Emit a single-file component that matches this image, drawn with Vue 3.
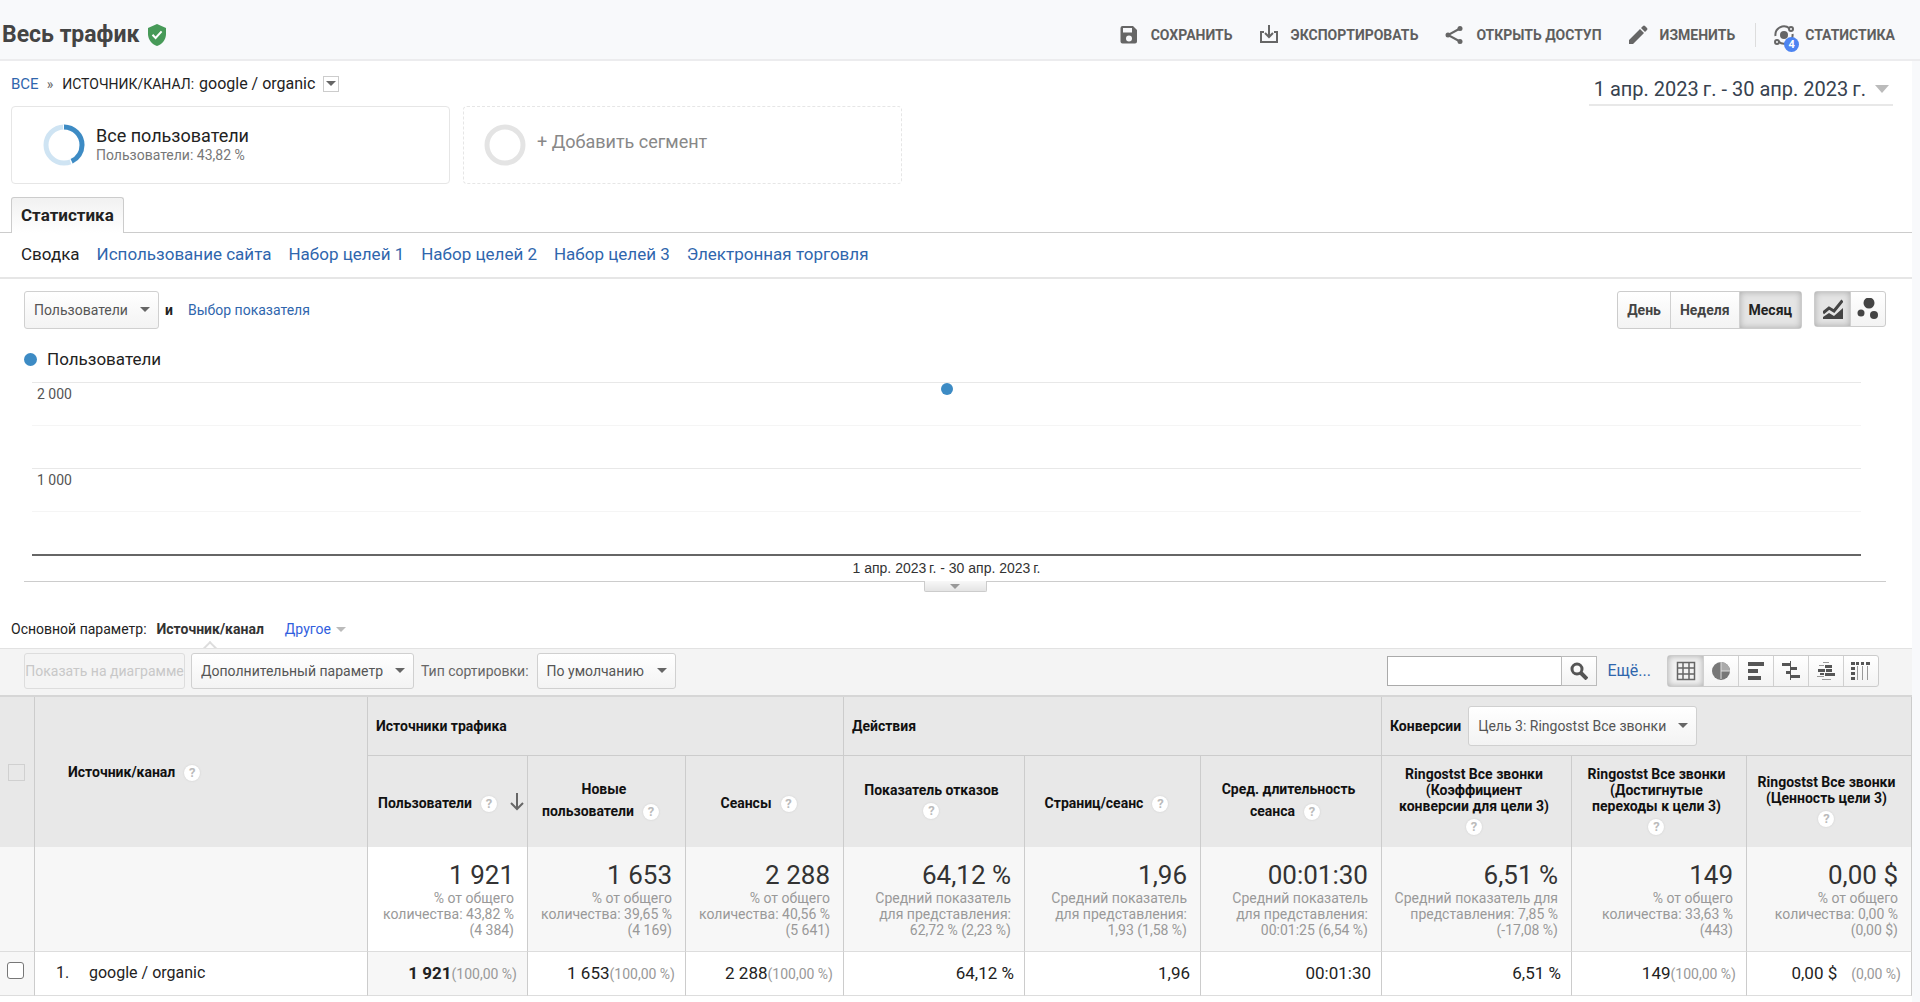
<script setup>
import { ref } from 'vue'

const actions = [
  { id: 'save', label: 'СОХРАНИТЬ' },
  { id: 'export', label: 'ЭКСПОРТИРОВАТЬ' },
  { id: 'share', label: 'ОТКРЫТЬ ДОСТУП' },
  { id: 'edit', label: 'ИЗМЕНИТЬ' },
]
const sections = ['Использование сайта', 'Набор целей 1', 'Набор целей 2', 'Набор целей 3', 'Электронная торговля']
const periods = ['День', 'Неделя', 'Месяц']
const period = ref('Месяц')
const range = '1 апр. 2023\u2009г. - 30 апр. 2023\u2009г.'
const views = ['table', 'pie', 'bars', 'compare', 'cloud', 'pivot']
const viewNames = {
  table: 'Таблица',
  pie: 'Доля',
  bars: 'Эффективность',
  compare: 'Сравнение',
  cloud: 'Облако терминов',
  pivot: 'Сводная таблица',
}
const view = ref('table')
const search = ref('')
const picked = ref(false)

const ticks = [
  { y: 0, label: '2 000' },
  { y: 25 },
  { y: 50, label: '1 000' },
  { y: 75 },
]
const peak = { x: 50, y: 4 }

const columns = [
  { head: ['Пользователи'], total: '1 921', note: ['% от общего', 'количества: 43,82 %', '(4 384)'], value: '1 921', share: '(100,00 %)', sorted: true },
  { head: ['Новые', 'пользователи'], total: '1 653', note: ['% от общего', 'количества: 39,65 %', '(4 169)'], value: '1 653', share: '(100,00 %)' },
  { head: ['Сеансы'], total: '2 288', note: ['% от общего', 'количества: 40,56 %', '(5 641)'], value: '2 288', share: '(100,00 %)' },
  { head: ['Показатель отказов', ''], total: '64,12 %', note: ['Средний показатель', 'для представления:', '62,72 % (2,23 %)'], value: '64,12 %' },
  { head: ['Страниц/сеанс'], total: '1,96', note: ['Средний показатель', 'для представления:', '1,93 (1,58 %)'], value: '1,96' },
  { head: ['Сред. длительность', 'сеанса'], total: '00:01:30', note: ['Средний показатель', 'для представления:', '00:01:25 (6,54 %)'], value: '00:01:30' },
  { head: ['Ringostst Все звонки', '(Коэффициент', 'конверсии для цели 3)', ''], total: '6,51 %', note: ['Средний показатель для', 'представления: 7,85 %', '(-17,08 %)'], value: '6,51 %' },
  { head: ['Ringostst Все звонки', '(Достигнутые', 'переходы к цели 3)', ''], total: '149', note: ['% от общего', 'количества: 33,63 %', '(443)'], value: '149', share: '(100,00 %)' },
  { head: ['Ringostst Все звонки', '(Ценность цели 3)', ''], total: '0,00 $', note: ['% от общего', 'количества: 0,00 %', '(0,00 $)'], value: '0,00 $', share: '(0,00 %)', spaced: true },
]
</script>

<template>
  <div class="page">
    <header class="topbar">
      <h1>Весь трафик</h1>
      <svg class="shield" viewBox="0 0 18 22" width="18" height="22">
        <path d="M9 0 18 4v6c0 5.500-3.800 10.300-9 12-5.200-1.700-9-6.500-9-12V4z" fill="#479a58" />
        <path d="M4.500 10.800 7.600 14l6-6.600" fill="none" stroke="#fff" stroke-width="2" />
      </svg>
      <div class="actions">
        <button v-for="a in actions" :key="a.id" type="button" class="action">
          <svg viewBox="0 0 20 20" width="20" height="20">
            <path v-if="a.id === 'save'" fill-rule="evenodd" fill="#666" d="M3.500 1H14l4 4v11.500a2 2 0 0 1-2 2H3.500a2 2 0 0 1-2-2V3a2 2 0 0 1 2-2zM4 3v4.500h9V3zM10 10.500a3 3 0 1 0 0 6 3 3 0 0 0 0-6z" />
            <path v-else-if="a.id === 'export'" fill="none" stroke="#666" stroke-width="2" d="M10 0v12M6 8l4 4 4-4M5 7H2v10h16V7h-3" />
            <g v-else-if="a.id === 'share'" fill="#666">
              <path d="M16 3.500 4 10l12 6.500" fill="none" stroke="#666" stroke-width="2" />
              <circle cx="16" cy="3.500" r="2.500" /><circle cx="4" cy="10" r="2.500" /><circle cx="16" cy="16.500" r="2.500" />
            </g>
            <path v-else fill="#666" d="M1 19v-4L12 4l4 4L5 19zM13 3l2-2q1-1 2 0l2 2q1 1 0 2l-2 2z" />
          </svg>
          {{ a.label }}
        </button>
        <button type="button" class="action insight">
          <span class="insight-icon">
            <svg viewBox="0 0 22 22" width="22" height="22">
              <circle cx="11" cy="11" r="4" fill="#666" />
              <path d="M2.500 12a8.500 8.500 0 0 1 14-7.500M19.500 10a8.500 8.500 0 0 1-14 7.500" fill="none" stroke="#666" stroke-width="2" />
              <circle cx="18" cy="5" r="2" fill="#f8f9fb" stroke="#666" stroke-width="2" />
              <circle cx="4" cy="18" r="2" fill="#f8f9fb" stroke="#666" stroke-width="2" />
            </svg>
            <span class="badge">4</span>
          </span>
          СТАТИСТИКА
        </button>
      </div>
    </header>

    <main class="report">
      <div class="intro">
        <div class="crumbs">
          <a href="#">ВСЕ</a><span class="sep">»</span><span>ИСТОЧНИК/КАНАЛ:</span>
          <span class="crumb-value">google / organic</span>
          <button type="button" class="crumb-menu" aria-label="Выбрать значение"><i class="tri"></i></button>
        </div>
        <button type="button" class="range">{{ range }}<i class="tri big"></i></button>
      </div>

      <div class="segments">
        <div class="segment">
          <svg viewBox="0 0 42 42" width="42" height="42">
            <circle cx="21" cy="21" r="18" fill="none" stroke="#cfe4f3" stroke-width="5" />
            <circle cx="21" cy="21" r="18" fill="none" stroke="#fff" stroke-width="5" pathLength="100" stroke-dasharray="45 55" transform="rotate(-93 21 21)" />
            <circle cx="21" cy="21" r="18" fill="none" stroke="#3d8bc4" stroke-width="5" pathLength="100" stroke-dasharray="43 57" transform="rotate(-90 21 21)" />
          </svg>
          <div class="segment-text">
            <div class="segment-name">Все пользователи</div>
            <div class="segment-note">Пользователи: 43,82 %</div>
          </div>
        </div>
        <button type="button" class="segment empty">
          <svg viewBox="0 0 42 42" width="42" height="42">
            <circle cx="21" cy="21" r="18" fill="none" stroke="#e4e4e4" stroke-width="5" />
          </svg>
          <span class="segment-name">+ Добавить сегмент</span>
        </button>
      </div>

      <div class="tabs"><button type="button" class="tab">Статистика</button></div>
      <nav class="sections">
        <span>Сводка</span>
        <a v-for="s in sections" :key="s" href="#">{{ s }}</a>
      </nav>

      <div class="chart-tools">
        <label class="drop metric"><select aria-label="Показатель"><option>Пользователи</option></select></label>
        <b class="and">и</b>
        <a href="#">Выбор показателя</a>
        <div class="group periods">
          <button v-for="p in periods" :key="p" type="button" :class="{ on: p === period }" @click="period = p">{{ p }}</button>
        </div>
        <div class="group kinds">
          <button type="button" class="on" aria-label="Линейная диаграмма">
            <svg viewBox="0 0 20 20" width="20" height="20">
              <path d="M0 20v-2l6-4 5 3 9-8v11z" fill="#444" />
              <path d="M0 14l6-5 5 3 8.500-10.500" fill="none" stroke="#444" stroke-width="3" />
            </svg>
          </button>
          <button type="button" aria-label="Диаграмма движения">
            <svg viewBox="0 0 22 22" width="22" height="22" fill="#444">
              <circle cx="12" cy="5" r="5.500" /><circle cx="4" cy="15" r="3.500" /><circle cx="17" cy="17" r="4" />
            </svg>
          </button>
        </div>
      </div>

      <div class="legend"><i></i>Пользователи</div>
      <div class="plot">
        <div v-for="t in ticks" :key="t.y" class="tick" :class="{ minor: !t.label }">{{ t.label }}</div>
        <i class="point" :style="{ left: peak.x + '%', top: peak.y + '%' }"></i>
      </div>
      <div class="axis-label">{{ range }}</div>
      <div class="divider"><button type="button" class="handle" aria-label="Свернуть график"><i class="tri"></i></button></div>

      <div class="dimension">
        <span>Основной параметр:</span>
        <b>Источник/канал</b>
        <a href="#">Другое<i class="tri"></i></a>
      </div>

      <div class="table-tools">
        <button type="button" class="plot-rows" disabled>Показать на диаграмме</button>
        <label class="drop second"><select aria-label="Дополнительный параметр"><option>Дополнительный параметр</option></select></label>
        <label class="sort-label" for="sort">Тип сортировки:</label>
        <span class="drop sort"><select id="sort"><option>По умолчанию</option></select></span>
        <form class="search" @submit.prevent>
          <input v-model="search" type="text" aria-label="Поиск">
          <button type="submit" aria-label="Найти">
            <svg viewBox="0 0 18 18" width="18" height="18" fill="none" stroke="#555">
              <circle cx="7" cy="7" r="5" stroke-width="3" /><path d="m11 11 6 6" stroke-width="4" />
            </svg>
          </button>
        </form>
        <a href="#" class="more">Ещё...</a>
        <div class="group views">
          <button v-for="v in views" :key="v" type="button" :class="{ on: v === view }" :aria-label="viewNames[v]" @click="view = v">
            <svg viewBox="0 0 20 20" width="20" height="20" fill="#555">
              <path v-if="v === 'table'" d="M1.500 1.500h17v17h-17zM1.500 7h17M1.500 13h17M7 1.500v17M13 1.500v17" fill="none" stroke="#666" stroke-width="1.500" />
              <template v-else-if="v === 'pie'">
                <circle cx="10" cy="10" r="9" fill="#777" /><path d="M10 1a9 9 0 0 1 9 9h-9z" fill="#aaa" /><path d="M10 1v17M10 10h9" stroke="#ddd" />
              </template>
              <path v-else-if="v === 'bars'" d="M2 1h16v4H2zM2 8h10v4H2zM2 15h13v4H2z" />
              <path v-else-if="v === 'compare'" d="M1 2h9v3H1zM10 6h6v3h-6zM5 10h5v3H5zM10 14h9v3h-9zM9 0h1v19H9z" />
              <template v-else-if="v === 'cloud'">
                <path d="M9 4h7v3H9zM2 8h7v3H2zM10 8h6v3h-6zM4 12h4v2H4zM9 12h10v3H9z" />
                <path d="M7 1h6v1H7zM3 4h5v1H3zM1 15h7v1H1zM6 18h9v1H6z" fill="#999" />
              </template>
              <template v-else>
                <path d="M0 1h4v3H0zM5 1h3v3H5zM10 1h3v3h-3zM15 1h4v3h-4zM0 6h4v3H0zM0 11h4v3H0zM0 16h4v3H0z" />
                <path d="M6 5h1v14H6zM11 5h1v14h-1zM16 5h1v14h-1z" fill="#999" />
              </template>
            </svg>
          </button>
        </div>
      </div>

      <table class="data">
        <colgroup>
          <col class="c-check"><col class="c-name"><col class="c-160"><col class="c-158"><col class="c-158">
          <col class="c-181"><col class="c-176"><col class="c-181"><col class="c-190"><col class="c-175"><col class="c-165">
        </colgroup>
        <thead>
          <tr class="groups">
            <th rowspan="2" class="check"><input type="checkbox" disabled aria-label="Выбрать все"></th>
            <th rowspan="2" class="name">Источник/канал<i class="help">?</i></th>
            <th colspan="3">Источники трафика</th>
            <th colspan="3">Действия</th>
            <th colspan="3">
              <div class="goal">
                <label for="goal">Конверсии</label>
                <span class="drop"><select id="goal"><option>Цель 3: Ringostst Все звонки</option></select></span>
              </div>
            </th>
          </tr>
          <tr class="heads">
            <th v-for="(c, i) in columns" :key="i">
              <div class="head" :class="{ ordered: c.sorted }">
                <div>
                  <div v-for="(line, n) in c.head" :key="n" class="line" :class="{ last: n === c.head.length - 1, bare: !line }">
                    {{ line }}<i v-if="n === c.head.length - 1" class="help">?</i>
                  </div>
                </div>
                <svg v-if="c.sorted" viewBox="0 0 14 18" width="14" height="18" fill="none" stroke="#666" stroke-width="2">
                  <path d="M7 0v16M1 10l6 6 6-6" />
                </svg>
              </div>
            </th>
          </tr>
        </thead>
        <tbody>
          <tr class="totals">
            <td></td>
            <td></td>
            <td v-for="(c, i) in columns" :key="i" :class="{ sorted: c.sorted }">
              <div class="total">{{ c.total }}</div>
              <div v-for="n in c.note" :key="n" class="note">{{ n }}</div>
            </td>
          </tr>
          <tr class="row">
            <td class="check"><input v-model="picked" type="checkbox" aria-label="google / organic"></td>
            <td class="source"><span>1.</span>google / organic</td>
            <td v-for="(c, i) in columns" :key="i" :class="{ sorted: c.sorted }">
              <span class="value">{{ c.value }}</span><span v-if="c.share" class="share" :class="{ spaced: c.spaced }">{{ c.share }}</span>
            </td>
          </tr>
        </tbody>
      </table>
    </main>
  </div>
</template>

<style>
body {
  margin: 0;
  background: #f8f9fb;
}
</style>

<style scoped>
.page {
  display: flex;
  flex-direction: column;
  min-height: 100vh;
  font: 14px/16px Roboto, "Noto Sans", sans-serif;
  color: #222;
}
.page *, .page *::after { box-sizing: border-box; }
button, select, input { font: inherit; color: inherit; margin: 0; }
button { padding: 0; border: 0; background: none; }
a { color: #2f66ad; text-decoration: none; }
.tri {
  display: inline-block;
  border: 5px solid transparent;
  border-top-color: #666;
  border-bottom: 0;
}
.topbar {
  display: flex;
  align-items: center;
  height: 61px;
  padding: 10px 25px 0 2px;
  border-bottom: 2px solid #ececee;
}
h1 { margin: 0 9px 0 0; font-size: 23px; line-height: 28px; color: #444; }
.actions { display: flex; align-items: center; gap: 26px; margin-left: auto; }
.action {
  display: flex;
  align-items: center;
  gap: 12px;
  font-weight: bold;
  color: #5f5f5f;
}
.insight { gap: 10px; height: 24px; padding-left: 17px; border-left: 1px solid #ddd; margin-left: -6px; }
.insight-icon { position: relative; display: flex; }
.badge {
  position: absolute;
  right: -4px;
  bottom: -6px;
  width: 15px;
  border-radius: 8px;
  background: #4d84f1;
  color: #fff;
  font-size: 11px;
  line-height: 15px;
  text-align: center;
}
.report { flex: 1; margin-right: 8px; background: #fff; }
.intro { display: flex; justify-content: space-between; padding: 0 19px 0 11px; height: 45px; }
.crumbs { display: flex; align-items: center; height: 45px; color: #222; }
.crumbs a { font-size: 15px; }
.sep { margin: 0 9px 0 8px; color: #666; }
.crumb-value { margin: 0 8px 0 5px; font-size: 16px; }
.crumb-menu {
  display: flex;
  align-items: center;
  justify-content: center;
  width: 16px;
  height: 16px;
  border: 1px solid #ccc;
}
.range {
  display: flex;
  align-items: center;
  gap: 9px;
  align-self: flex-end;
  height: 32px;
  padding: 0 4px 1px 5px;
  border-bottom: 2px solid #e8e8e8;
  font-size: 20px;
  color: #37424f;
}
.tri.big { border-width: 8px 7px 0; border-top-color: #bbb; }
.segments { display: flex; gap: 13px; padding: 0 11px; }
.segment {
  display: flex;
  align-items: center;
  gap: 11px;
  width: 439px;
  height: 78px;
  padding: 0 31px;
  border: 1px solid #e6e6e6;
  border-radius: 4px;
}
.segment.empty { padding: 0 20px; border-style: dashed; color: #888; }
.empty .segment-name { padding-bottom: 6px; }
.segment > svg { flex: none; }
.segment-text { padding-bottom: 1px; }
.segment-name { font-size: 18px; line-height: 20px; }
.segment-note { line-height: 18px; color: #777; }
.tabs { display: flex; height: 49px; align-items: flex-end; padding: 0 11px; border-bottom: 1px solid #ccc; }
.tab {
  height: 36px;
  padding: 0 9px 2px;
  margin-bottom: -1px;
  border: 1px solid #ccc;
  border-bottom: 0;
  border-radius: 3px 3px 0 0;
  background: linear-gradient(#f1f1f1, #fff);
  font-size: 17px;
  font-weight: bold;
}
.sections {
  display: flex;
  align-items: center;
  gap: 17px;
  height: 46px;
  padding: 0 21px 2px;
  border-bottom: 2px solid #e6e6e6;
  font-size: 17px;
}
.chart-tools { display: flex; align-items: center; height: 38px; margin: 12px 26px 0 24px; }
.drop { position: relative; display: inline-flex; height: 36px; }
.drop::after {
  content: "";
  position: absolute;
  right: 9px;
  top: 50%;
  margin-top: -3px;
  border: 5px solid transparent;
  border-top-color: #666;
  border-bottom: 0;
  pointer-events: none;
}
.drop select {
  width: 100%;
  appearance: none;
  padding: 0 30px 0 9px;
  border: 1px solid #d0d0d0;
  border-radius: 3px;
  background: linear-gradient(#fff, #f3f3f3);
  color: #555;
}
.metric { width: 135px; height: 38px; }
.and { margin: 0 15px 0 6px; }
.group { display: flex; border: 1px solid #ccc; border-radius: 3px; background: linear-gradient(#fff, #f3f3f3); }
.group button { display: flex; align-items: center; justify-content: center; border-left: 1px solid #d0d0d0; }
.group button:first-child { border-left: 0; }
.group button.on { background: #e4e4e4; box-shadow: inset 0 0 6px #aaa; }
.periods { height: 38px; margin-left: auto; font-weight: bold; color: #444; }
.periods button { padding: 0 9px; }
.periods .on { color: #222; }
.kinds { height: 36px; margin-left: 12px; align-self: flex-start; }
.kinds button { width: 35px; }
.legend { display: flex; align-items: center; gap: 10px; margin: 20px 24px 0; height: 20px; font-size: 17px; }
.legend i { width: 13px; height: 13px; border-radius: 50%; background: #3d8bc4; }
.plot {
  position: relative;
  display: grid;
  grid-template-rows: repeat(4, 43px);
  margin: 13px 51px 0 32px;
  border-bottom: 2px solid #666;
}
.tick { padding: 3px 5px; border-top: 1px solid #e8e8e8; color: #555; }
.tick.minor { border-top-color: #f5f5f5; }
.point {
  position: absolute;
  width: 12px;
  height: 12px;
  margin: -6px;
  border-radius: 50%;
  background: #3d8bc4;
}
.axis-label {
  padding: 4px 51px 5px 32px;
  font-family: "Liberation Sans", sans-serif;
  text-align: center;
  color: #333;
}
.divider { display: flex; justify-content: center; height: 11px; margin: 0 26px 0 24px; border-top: 1px solid #ccc; }
.handle {
  display: flex;
  align-items: center;
  justify-content: center;
  width: 63px;
  height: 11px;
  margin-top: -1px;
  border: 1px solid #ccc;
  border-top: 0;
  border-radius: 0 0 2px 2px;
  background: linear-gradient(#f8f8f8, #e4e4e4);
}
.handle .tri { border-top-color: #999; }
.dimension { display: flex; gap: 10px; height: 56px; padding: 29px 11px 0; }
.dimension b { position: relative; color: #333; }
.dimension b::after {
  content: "";
  position: absolute;
  left: 50%;
  top: 22px;
  width: 10px;
  height: 10px;
  border: 2px solid #ddd;
  border-width: 2px 0 0 2px;
  transform: translateX(-50%) rotate(45deg);
}
.dimension a { margin-left: 11px; color: #315ede; }
.dimension .tri { margin: 0 0 2px 5px; border-top-color: #bbb; }
.table-tools {
  position: relative;
  display: flex;
  align-items: center;
  height: 49px;
  padding: 0 33px 2px 24px;
  border-top: 1px solid #e2e2e2;
  border-bottom: 2px solid #d6d6d6;
  background: #f4f4f4;
}
.plot-rows {
  height: 36px;
  width: 161px;
  border: 1px solid #ddd;
  border-radius: 3px;
  color: #c8c8c8;
  white-space: nowrap;
}
.second { width: 223px; margin: 0 7px 0 6px; }
.sort { width: 139px; margin-left: 8px; }
.sort-label { color: #666; }
.search { display: flex; margin-left: auto; height: 30px; }
.search input { width: 175px; padding: 0 8px; border: 1px solid #aaa; background: #fff; }
.search button {
  display: flex;
  align-items: center;
  justify-content: center;
  width: 36px;
  margin-left: -1px;
  border: 1px solid #bbb;
  background: linear-gradient(#fff, #f3f3f3);
}
.more { margin: 0 16px 0 10px; font-size: 16px; }
.views { height: 32px; }
.views button { width: 35px; }
.views button.on { background: #f2f2f2; }
.data { width: 100%; table-layout: fixed; border-collapse: separate; border-spacing: 0; }
.c-check { width: 35px; }
.c-160 { width: 160px; }
.c-158 { width: 158px; }
.c-176 { width: 176px; }
.c-181 { width: 181px; }
.c-190 { width: 190px; }
.c-175 { width: 175px; }
.c-165 { width: 165px; }
.data th, .data td { padding: 0; border-right: 1px solid #ccc; }
.data th { background: #e8e8e8; color: #111; }
.groups th { height: 59px; padding: 0 8px; border-bottom: 1px solid #ccc; text-align: left; }
.groups .check, .groups .name { border-bottom: 0; }
.groups .name { padding-left: 33px; }
.data .check { padding: 0; text-align: center; vertical-align: middle; }
.goal { display: flex; align-items: center; gap: 7px; }
.goal .drop { width: 229px; height: 40px; }
.goal select { font-weight: normal; }
input[type="checkbox"] {
  display: block;
  appearance: none;
  width: 17px;
  height: 17px;
  margin: 0 0 0 7px;
  border: 1px solid #777;
  border-radius: 3px;
  background: #fff;
}
input[type="checkbox"]:checked { background: #3d8bc4; }
input[type="checkbox"]:disabled { margin-left: 8px; border-color: #d0d0d0; border-radius: 0; background: none; }
.heads th { height: 91px; text-align: center; }
.head { display: flex; align-items: center; justify-content: center; padding-right: 5px; }
.head.ordered { justify-content: flex-end; gap: 6px; padding-right: 3px; }
.line.last { padding-top: 2px; line-height: 24px; }
.line.bare { padding-top: 0; }
.help {
  display: inline-block;
  width: 16px;
  height: 16px;
  margin: 0 7px 0 9px;
  border-radius: 50%;
  background: #fff;
  box-shadow: 0 0 2px #ccc;
  color: #bbb;
  font: bold 13px/16px Roboto, sans-serif;
  text-align: center;
  vertical-align: baseline;
}
.bare .help { margin: 0; }
.totals td {
  height: 105px;
  padding: 0 13px 0 0;
  border-bottom: 1px solid #ddd;
  background: #f7f7f7;
  text-align: right;
}
.totals .sorted { background: #fff; }
.total { font-size: 26px; line-height: 30px; color: #333; }
.note { color: #999; }
.row td {
  height: 44px;
  padding: 0 10px 1px 0;
  border-bottom: 1px solid #ddd;
  background: #fff;
  text-align: right;
  font-size: 17px;
  white-space: nowrap;
}
.row .check { padding: 0 0 6px; }
.row .check, .row .sorted { background: #f7f7f7; }
.row .sorted .value { font-weight: bold; }
.row .source { text-align: left; font-size: 16px; }
.source span { display: inline-block; width: 33px; margin-left: 21px; }
.share { font-size: 14px; color: #999; }
.share.spaced { margin-left: 14px; }
</style>
